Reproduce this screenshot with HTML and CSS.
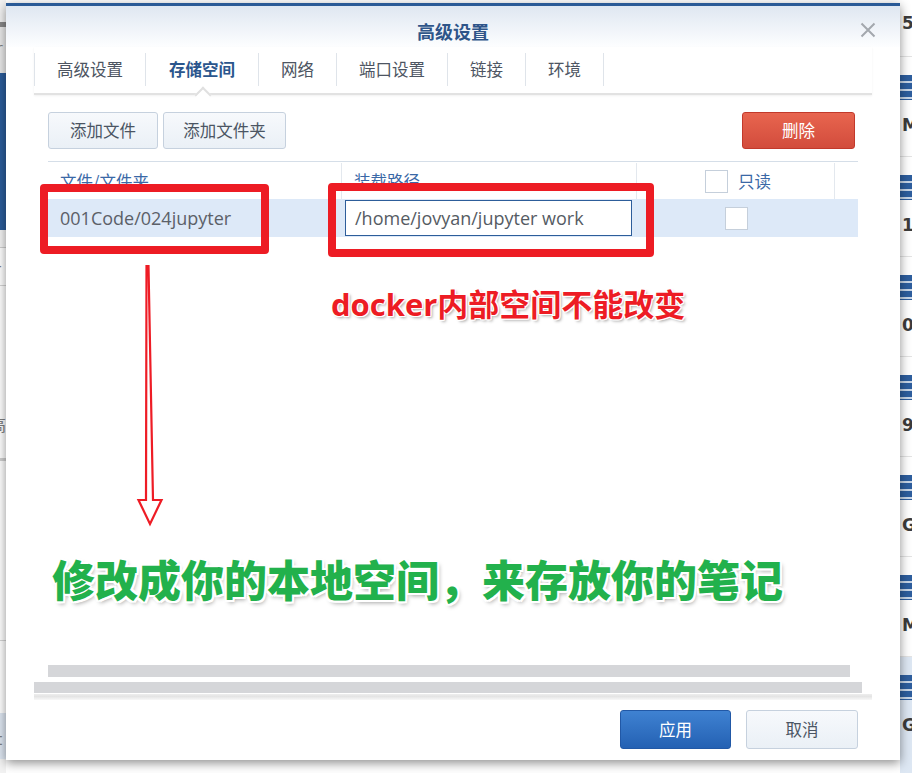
FILE: index.html
```html
<!DOCTYPE html>
<html lang="zh-CN">
<head>
<meta charset="utf-8">
<title>高级设置</title>
<link rel="stylesheet" href="styles.css">
</head>
<body>
<div class="page">
  <div class="side-left">
    <div class="sl sl-a"></div>
    <div class="sl sl-b"></div>
    <div class="sl sl-c"><span class="slt">r</span></div>
    <div class="sl sl-d"></div>
    <div class="sl sl-e"></div>
    <div class="sl sl-f"><span class="slt">-</span></div>
    <div class="sl sl-g"><span class="slt cjk">高</span></div>
    <div class="sl sl-h"></div>
    <div class="sl sl-i"></div>
    <div class="sl sl-j"></div>
    <div class="sl sl-k"><span class="slt">t</span></div>
    <div class="sl sl-l"></div>
  </div>
  <div class="main"></div>
  <div class="side-right">
    <div class="ri first"><span class="rl">5</span></div>
    <div class="ri"><i class="ric"></i><span class="rl">M</span></div>
    <div class="ri"><i class="ric"></i><span class="rl">1</span></div>
    <div class="ri"><i class="ric"></i><span class="rl">0</span></div>
    <div class="ri"><i class="ric"></i><span class="rl">9</span></div>
    <div class="ri"><i class="ric"></i><span class="rl">G</span></div>
    <div class="ri"><i class="ric"></i><span class="rl">M</span></div>
    <div class="ri sel"><i class="ric"></i><span class="rl">G</span></div>
  </div>
</div>

<div class="dialog">
  <div class="dlg-head">
    <span class="dlg-title">高级设置</span>
    <svg class="close" width="16" height="16" viewBox="0 0 16 16"><path d="M1.5 1.5 L14.5 14.5 M14.5 1.5 L1.5 14.5" stroke="#a3a8ae" stroke-width="2" fill="none"/></svg>
  </div>
  <div class="tabs">
    <div class="tab">高级设置</div>
    <div class="tab active">存储空间</div>
    <div class="tab">网络</div>
    <div class="tab">端口设置</div>
    <div class="tab">链接</div>
    <div class="tab">环境</div>
  </div>
  <div class="dlg-body">
    <div class="toolbar">
      <div class="btn w-file">添加文件</div>
      <div class="btn w-folder">添加文件夹</div>
      <div class="btn btn-del">删除</div>
    </div>
    <div class="grid">
      <div class="grid-head">
        <div class="gh">文件/文件夹</div>
        <div class="gh">装载路径</div>
        <div class="gh ro"><span class="cb"></span><span>只读</span></div>
        <div class="gh last"></div>
      </div>
      <div class="grid-row">
        <div class="gc gc1">001Code/024jupyter</div>
        <div class="gc gc2"><div class="inp">/home/jovyan/jupyter work</div></div>
        <div class="gc gc3"><span class="cb"></span></div>
        <div class="gc"></div>
      </div>
    </div>
    <div class="spacer"></div>
    <div class="hbar1"></div>
    <div class="hbar2"></div>
    <div class="sep"></div>
  </div>
  <div class="dlg-foot">
    <div class="fbtn apply">应用</div>
    <div class="fbtn cancel">取消</div>
  </div>
</div>

<div class="mark box1"></div>
<div class="mark box2"></div>
<svg class="arrow" width="30" height="266" viewBox="135 262 30 266"><polygon points="146.5,266 148.5,266 153,500 161.5,500 150,524 138.5,500 146,500" fill="#fff" stroke="#ee1c25" stroke-width="2.2" stroke-linejoin="miter"/></svg>
<div class="note-red">docker内部空间不能改变</div>
<div class="note-green">修改成你的本地空间，来存放你的笔记</div>
</body>
</html>
```

FILE: styles.css
```css
html, body {
  margin: 0;
  padding: 0;
}
body {
  width: 912px;
  height: 773px;
  overflow: hidden;
  position: relative;
  background: #fff;
  font-family: "Noto Sans CJK SC", "Open Sans", sans-serif;
}

/* ---------- background page ---------- */
.page {
  display: flex;
  height: 773px;
}
.side-left {
  width: 6px;
  flex: none;
  display: flex;
  flex-direction: column;
  overflow: hidden;
}
.sl { flex: none; box-sizing: border-box; position: relative; overflow: hidden; }
.slt {
  display: block;
  margin-left: -4px;
  font-family: "DejaVu Sans", sans-serif;
  font-size: 16px;
  color: #808080;
  line-height: 20px;
}
.slt.cjk { font-family: "Noto Sans CJK SC", sans-serif; margin-left: -10px; }
.sl-a { height: 22px; background: #f2f2f2; }
.sl-b { height: 5px; background: #888; }
.sl-c { height: 46px; background: #e9e9e9; padding-top: 12px; }
.sl-d { height: 157px; background: #2b5c9a; }
.sl-e { height: 18px; background: #f4f4f4; border-bottom: 1px solid #cfcfcf; }
.sl-f { height: 38px; background: #fff; border-bottom: 1px solid #d5d5d5; padding-top: 8px; }
.sl-g { height: 172px; background: #fff; padding-top: 128px; }
.sl-h { height: 3px; background: #cfcfcf; }
.sl-i { height: 180px; background: #fff; border-bottom: 1px solid #d5d5d5; }
.sl-j { height: 72px; background: #fff; }
.sl-k { height: 46px; background: #dde6f1; padding-top: 17px; }
.sl-l { height: 15px; background: #f2f2f2; }

.main { flex: 1; background: #fff; }

.side-right {
  width: 12px;
  flex: none;
  display: flex;
  flex-direction: column;
  overflow: hidden;
  background: #fff;
}
.ri {
  flex: none;
  height: 100px;
  box-sizing: border-box;
  border-bottom: 1px solid #e3e3e3;
  padding-top: 18px;
}
.ri.first { height: 57px; padding-top: 13px; }
.ri.sel { background: #dde7f3; border-bottom: none; height: 116px; }
.ric {
  display: block;
  width: 14px;
  height: 25px;
  background: repeating-linear-gradient(#2e5e9e 0 6px, #c9d6e7 6px 8px);
}
.rl {
  display: block;
  margin-top: 15px;
  padding-left: 2px;
  font-family: "DejaVu Sans", sans-serif;
  font-weight: 700;
  font-size: 17px;
  line-height: 20px;
  color: #3c3c3c;
  white-space: nowrap;
}
.ri.first .rl { margin-top: 0; }

/* ---------- dialog ---------- */
.dialog {
  position: absolute;
  left: 6px;
  top: 3px;
  width: 894px;
  height: 757px;
  box-sizing: border-box;
  border-top: 3px solid #2a5a96;
  background: #fff;
  box-shadow: 0 3px 10px rgba(0, 0, 0, 0.45);
  display: flex;
  flex-direction: column;
}
.dlg-head {
  flex: none;
  height: 41px;
  position: relative;
  text-align: center;
  background: linear-gradient(#dfe7f1, #f4f7fb 70%, #fdfeff);
}
.dlg-title {
  display: block;
  padding-top: 13px;
  line-height: 24px;
  font-size: 18px;
  font-weight: 700;
  color: #2e5589;
}
.close {
  position: absolute;
  right: 24px;
  top: 16px;
}

.tabs {
  flex: none;
  display: flex;
  height: 46px;
  margin: 0 28px;
  border-bottom: 2px solid #e2e2e2;
  box-shadow: 0 1px 2px rgba(0, 0, 0, 0.06);
  position: relative;
}
.tab {
  margin-top: 6px;
  height: 33px;
  line-height: 33px;
  padding: 0 22px;
  border-left: 1px solid #dfe4ea;
  font-size: 16.5px;
  color: #4d5562;
  position: relative;
}
.tab:last-child { border-right: 1px solid #dfe4ea; }
.tab.active {
  padding: 0 23px;
  color: #2b568d;
  font-weight: 700;
}
.tab.active::after {
  content: "";
  position: absolute;
  left: 50%;
  top: calc(100% + 3px);
  width: 10px;
  height: 10px;
  margin-left: -5px;
  background: #fff;
  border-top: 2px solid #e0e0e0;
  border-left: 2px solid #e0e0e0;
  transform: rotate(45deg);
  z-index: 2;
}

.dlg-body {
  flex: 1;
  min-height: 0;
  display: flex;
  flex-direction: column;
  padding: 17px 42px 0;
}
.toolbar {
  display: flex;
  gap: 5px;
}
.btn {
  height: 37px;
  box-sizing: border-box;
  border: 1px solid #c6d1de;
  border-radius: 3px;
  background: linear-gradient(#f7f9fc, #eaf0f6);
  font-size: 16.5px;
  line-height: 35px;
  color: #4b5563;
  text-align: center;
}
.w-file { width: 110px; }
.w-folder { width: 123px; }
.btn-del {
  width: 113px;
  margin-left: auto;
  margin-right: 3px;
  background: linear-gradient(#e8654f, #d24c3c);
  border-color: #c2392b;
  color: #fff;
}

.grid {
  margin-top: 12px;
  border-top: 1px solid #d5dee8;
}
.grid-head,
.grid-row {
  display: grid;
  grid-template-columns: 294px 295px 198px 1fr;
}
.grid-head { height: 37px; }
.gh {
  border-right: 1px solid #e3e8ee;
  margin-top: 1px;
  padding-left: 12px;
  font-size: 16.5px;
  line-height: 36px;
  color: #3a68a6;
}
.gh.last { border-right: none; }
.gh.ro {
  display: flex;
  justify-content: center;
  align-items: center;
  gap: 10px;
  padding: 0 0 0 5px;
}
.cb {
  display: block;
  width: 23px;
  height: 23px;
  box-sizing: border-box;
  border: 1px solid #c5cfdb;
  background: #fff;
}
.grid-row {
  height: 38px;
  background: #dde9f8;
  align-items: center;
}
.gc1 {
  padding-left: 12px;
  font-family: "Open Sans", sans-serif;
  font-size: 18px;
  color: #5b6068;
}
.gc2 { padding-left: 3px; }
.inp {
  width: 287px;
  height: 36px;
  box-sizing: border-box;
  border: 1px solid #2d5d9a;
  background: #fff;
  padding-left: 9px;
  font-family: "Open Sans", sans-serif;
  font-size: 18px;
  line-height: 34px;
  color: #555b63;
}
.gc3 {
  display: flex;
  justify-content: center;
}

.spacer { flex: 1; }
.hbar1 {
  flex: none;
  height: 12px;
  margin-right: 8px;
  background: #d5d6d9;
}
.hbar2 {
  flex: none;
  height: 11px;
  margin: 5px -4px 0 -14px;
  background: #d5d6d9;
}
.sep {
  flex: none;
  height: 6px;
  margin: 1px -14px 0;
  background: linear-gradient(#eeeeee, #e4e4e4 40%, #f8f8f8);
}

.dlg-foot {
  flex: none;
  height: 60px;
  box-sizing: border-box;
  display: flex;
  justify-content: flex-end;
  gap: 15px;
  padding: 10px 42px 0;
}
.fbtn {
  width: 112px;
  height: 39px;
  box-sizing: border-box;
  border-radius: 3px;
  font-size: 16.5px;
  line-height: 37px;
  text-align: center;
}
.apply {
  width: 111px;
  background: linear-gradient(#3f82d2, #2461b3);
  border: 1px solid #2158a6;
  color: #fff;
}
.cancel {
  background: linear-gradient(#f7f9fc, #eaf0f6);
  border: 1px solid #c6d1de;
  color: #4b5563;
}

/* ---------- annotations ---------- */
.mark {
  position: absolute;
  box-sizing: border-box;
  border: 8px solid #ed1c24;
  border-radius: 4px;
}
.box1 { left: 40px; top: 184px; width: 229px; height: 70px; }
.box2 { left: 328px; top: 183px; width: 326px; height: 74px; }
.arrow {
  position: absolute;
  left: 135px;
  top: 262px;
}
.note-red {
  position: absolute;
  left: 331px;
  top: 286px;
  font-family: "Open Sans", "Noto Sans CJK SC", sans-serif;
  font-weight: 700;
  font-size: 31px;
  line-height: 36px;
  color: #ed1c24;
  white-space: nowrap;
  text-shadow: 1px 0 0 #fff, -1px 0 0 #fff, 0 1px 0 #fff, 0 -1px 0 #fff,
    1px 1px 0 #fff, -1px -1px 0 #fff, 1px -1px 0 #fff, -1px 1px 0 #fff,
    2px 2px 3px rgba(0, 0, 0, 0.35);
}
.note-green {
  position: absolute;
  left: 52px;
  top: 553px;
  font-family: "Noto Sans CJK SC", sans-serif;
  font-weight: 900;
  font-size: 43px;
  line-height: 50px;
  color: #22b14c;
  white-space: nowrap;
  text-shadow: 2px 0 0 #fff, -2px 0 0 #fff, 0 2px 0 #fff, 0 -2px 0 #fff,
    2px 2px 0 #fff, -2px -2px 0 #fff, 2px -2px 0 #fff, -2px 2px 0 #fff,
    2px 3px 4px rgba(0, 0, 0, 0.35);
}
```
